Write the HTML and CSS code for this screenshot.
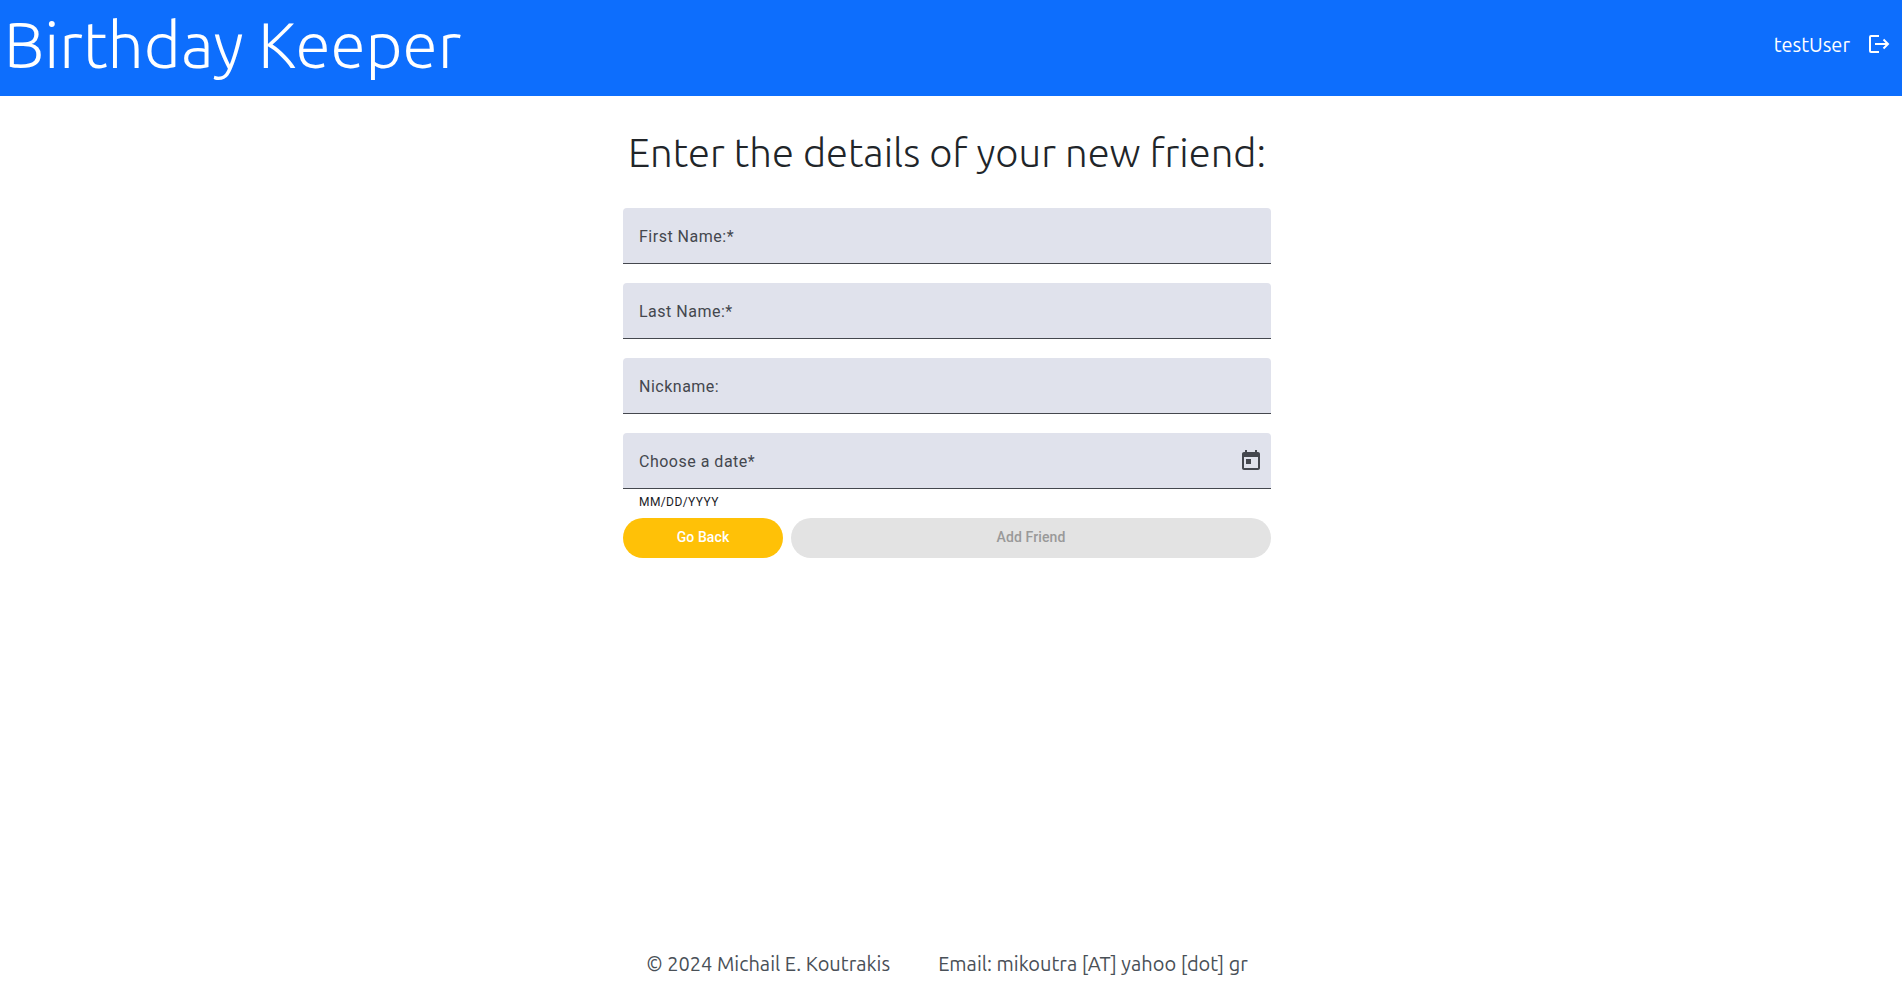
FILE: index.html
```html
<!DOCTYPE html>
<html lang="en">
<head>
<meta charset="utf-8">
<meta name="viewport" content="width=device-width, initial-scale=1">
<title>Birthday Keeper</title>
<link rel="stylesheet" href="styles.css">
</head>
<body>
<header class="navbar">
  <a class="brand" href="#">Birthday Keeper</a>
  <div class="account">
    <span class="user">testUser</span>
    <button class="icon-button" type="button" aria-label="Log out">
      <svg width="24" height="24" viewBox="0 0 24 24" fill="none" stroke="currentColor" stroke-width="2" aria-hidden="true">
        <path d="M13 4H5Q4 4 4 5V19Q4 20 5 20H13"/>
        <path d="M9 12H22M17.5 7.5L22 12L17.5 16.5"/>
      </svg>
    </button>
  </div>
</header>
<main class="content">
  <h1 class="title">Enter the details of your new friend:</h1>
  <form class="friend-form">
    <div class="field">
      <input id="first" type="text" placeholder=" " required>
      <label for="first">First Name:*</label>
    </div>
    <div class="field">
      <input id="last" type="text" placeholder=" " required>
      <label for="last">Last Name:*</label>
    </div>
    <div class="field">
      <input id="nick" type="text" placeholder=" ">
      <label for="nick">Nickname:</label>
    </div>
    <div class="field">
      <input id="date" type="text" placeholder=" " aria-describedby="date-hint" required>
      <label for="date">Choose a date*</label>
      <button class="icon-button picker" type="button" aria-label="Open calendar">
        <svg width="24" height="24" viewBox="0 0 24 24" fill="currentColor" aria-hidden="true">
          <path d="M19 3h-1V1h-2v2H8V1H6v2H5c-1.11 0-1.99.9-1.99 2L3 19c0 1.1.89 2 2 2h14c1.1 0 2-.9 2-2V5c0-1.1-.9-2-2-2zm0 16H5V8h14v11zM7 10h5v5H7z"/>
        </svg>
      </button>
    </div>
    <p class="hint" id="date-hint">MM/DD/YYYY</p>
    <div class="actions">
      <button class="button back" type="button">Go Back</button>
      <button class="button add" type="submit" disabled>Add Friend</button>
    </div>
  </form>
</main>
<footer class="footer">
  <span>© 2024 Michail E. Koutrakis</span>
  <span>Email: mikoutra [AT] yahoo [dot] gr</span>
</footer>
</body>
</html>
```
FILE: styles.css
```css
* {
  box-sizing: border-box;
}

body {
  margin: 0;
  min-height: 100vh;
  display: flex;
  flex-direction: column;
  background: #fff;
  color: #212529;
  font-family: Ubuntu, "Open Sans", sans-serif;
}

.navbar {
  display: flex;
  align-items: center;
  justify-content: space-between;
  min-height: 96px;
  padding: 0 12px 8px 4px;
  background: #0d6efd;
  color: #fff;
}

.brand {
  color: inherit;
  font-size: 64px;
  font-weight: 300;
  line-height: 80px;
  text-decoration: none;
}

.account {
  display: flex;
  align-items: center;
  gap: 16px;
  font-size: 20px;
}

.icon-button {
  display: flex;
  padding: 0;
  border: 0;
  background: none;
  color: inherit;
  cursor: pointer;
}

.content {
  flex: 1;
  display: flex;
  flex-direction: column;
  align-items: center;
  padding: 32px 8px 0 0;
}

.title {
  margin: 0 0 30px;
  font-size: 40px;
  font-weight: 300;
  line-height: 50px;
}

.friend-form {
  width: 100%;
  max-width: 648px;
  font-family: Roboto, sans-serif;
}

.field {
  position: relative;
  display: flex;
  align-items: center;
  height: 56px;
  margin-bottom: 19px;
  border-bottom: 1px solid #44474e;
  border-radius: 4px 4px 0 0;
  background: #e0e2ec;
  color: #44474e;
}

.field input {
  flex: 1;
  align-self: stretch;
  min-width: 0;
  padding: 20px 16px 4px;
  border: 0;
  outline: 0;
  background: transparent;
  color: #1a1b1f;
  font: 16px/24px Roboto, sans-serif;
}

.field label {
  position: absolute;
  left: 16px;
  top: 17px;
  font-size: 16px;
  line-height: 24px;
  letter-spacing: 0.5px;
  pointer-events: none;
}

.field input:focus + label,
.field input:not(:placeholder-shown) + label {
  top: 4px;
  font-size: 12px;
  line-height: 16px;
}

.picker {
  margin-right: 8px;
}

.hint {
  margin: -14px 16px 8px;
  color: #1a1b1f;
  font-size: 12px;
  line-height: 16px;
  letter-spacing: 0.4px;
}

.actions {
  display: grid;
  grid-template-columns: 1fr 3fr;
  gap: 8px;
}

.button {
  height: 40px;
  padding: 0 24px 2px;
  border: 0;
  border-radius: 20px;
  font: 500 14px/20px Roboto, sans-serif;
  letter-spacing: 0.1px;
}

.back {
  background: #ffc107;
  color: #fff;
  cursor: pointer;
}

.add {
  background: #e3e3e3;
  color: #999;
}

.footer {
  display: flex;
  flex-wrap: wrap;
  justify-content: center;
  gap: 0 48px;
  padding: 0 8px 6px 0;
  color: #495057;
  font-size: 20px;
  line-height: 28px;
}
```
